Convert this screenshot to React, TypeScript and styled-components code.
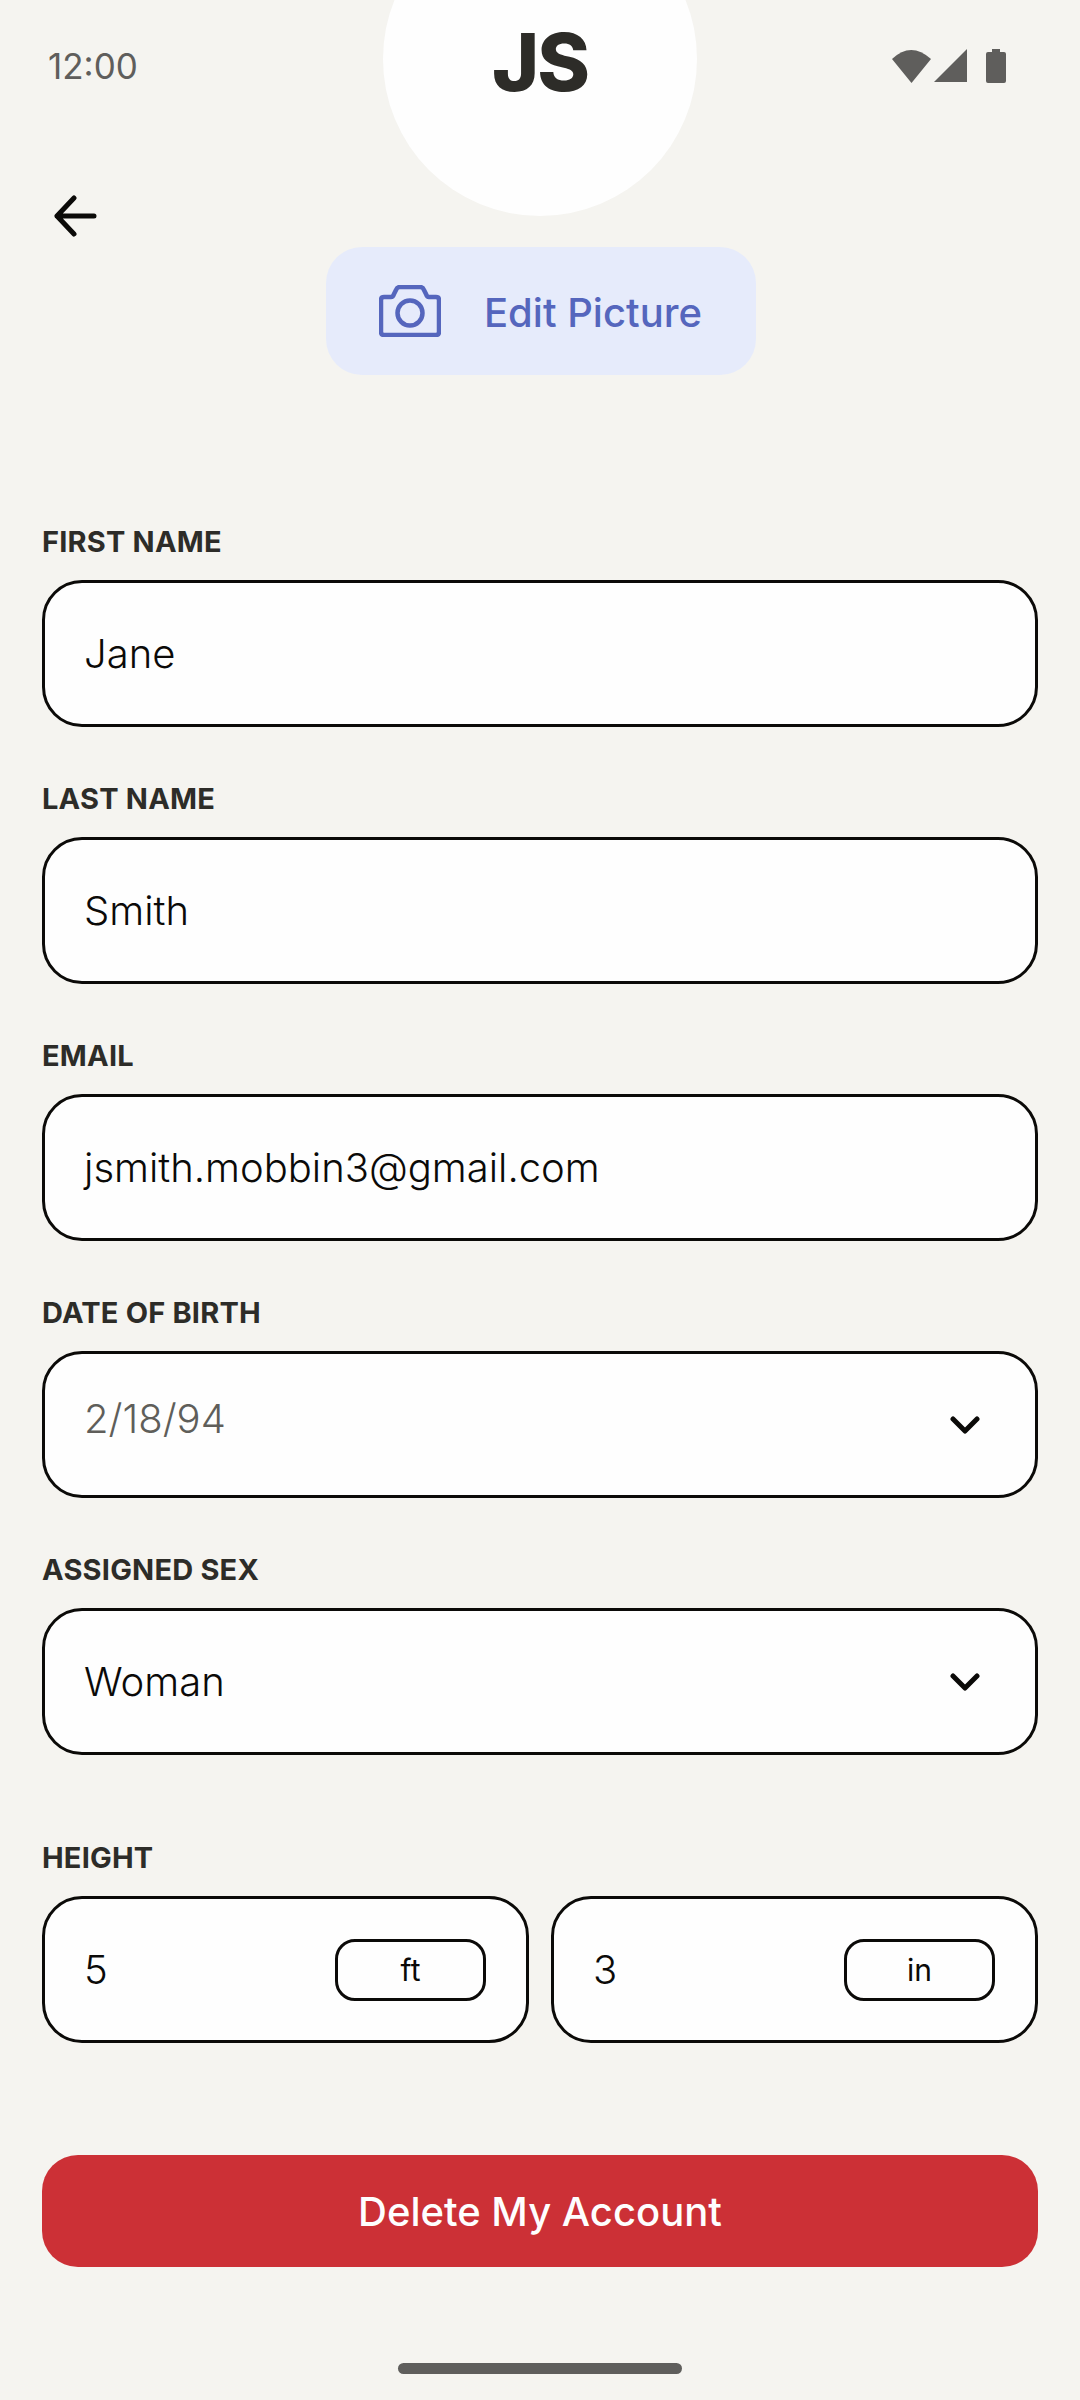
import * as React from "react";
import styled, { createGlobalStyle } from "styled-components";

const colors = {
  page: "#f5f4f0",
  white: "#fefefe",
  ink: "#0b0a08",
  label: "#2d2c28",
  status: "#5f5e5c",
  muted: "#5f5e5a",
  blue: "#5566bd",
  blueLight: "#e6ebfb",
  red: "#cc3036",
};

const GlobalStyle = createGlobalStyle`
  html, body {
    margin: 0;
    background: ${colors.page};
  }
  * {
    box-sizing: border-box;
  }
`;

const Page = styled.div`
  background: ${colors.page};
  color: ${colors.ink};
  display: flex;
  flex-direction: column;
  font-family: "Inter", "Liberation Sans", sans-serif;
  height: 2400px;
  overflow: hidden;
  padding: 0 42px;
  position: relative;
  width: 1080px;
`;

const Avatar = styled.div`
  align-items: flex-start;
  background: ${colors.white};
  border-radius: 50%;
  color: ${colors.label};
  display: flex;
  font-size: 80px;
  font-weight: 800;
  height: 314px;
  justify-content: center;
  left: 383px;
  letter-spacing: -2px;
  line-height: 100px;
  padding-top: 110px;
  position: absolute;
  top: -98px;
  width: 314px;
`;

const StatusBar = styled.div`
  align-items: center;
  color: ${colors.status};
  display: flex;
  font-size: 35px;
  height: 66px;
  justify-content: space-between;
  margin-top: 33px;
  padding: 0 6px;
`;

const StatusIcons = styled.svg`
  margin-right: 26px;
`;

const BackRow = styled.div`
  align-items: center;
  display: flex;
  height: 60px;
  margin-top: 87px;
  padding-left: 11px;
`;

const EditButton = styled.div`
  align-items: center;
  align-self: center;
  background: ${colors.blueLight};
  border-radius: 36px;
  color: ${colors.blue};
  display: flex;
  font-size: 40px;
  font-weight: 500;
  gap: 43px;
  height: 128px;
  margin-left: 2px;
  margin-top: 1px;
  padding-left: 53px;
  width: 430px;
`;

const EditLabel = styled.span`
  margin-top: 2px;
`;

const Form = styled.div`
  display: flex;
  flex-direction: column;
  margin-top: 149px;
`;

const Field = styled.div<{ $gap?: number }>`
  display: flex;
  flex-direction: column;
  margin-bottom: ${(p) => p.$gap ?? 54}px;
`;

const Label = styled.div`
  color: ${colors.label};
  font-size: 29px;
  font-weight: 700;
  height: 56px;
  letter-spacing: 0.2px;
  line-height: 36px;
`;

const InputBox = styled.div<{ $muted?: boolean }>`
  align-items: center;
  background: ${colors.white};
  border: 3px solid ${colors.ink};
  border-radius: 40px;
  color: ${(p) => (p.$muted ? colors.muted : colors.ink)};
  display: flex;
  flex: 0 0 147px;
  font-size: 40px;
  font-weight: 350;
  height: 147px;
  justify-content: space-between;
  padding: 0 55px 0 39px;
`;

const InputText = styled.span<{ $raise?: boolean }>`
  margin-bottom: ${(p) => (p.$raise ? 12 : 0)}px;
`;

const HeightRow = styled.div`
  display: flex;
  gap: 22px;
`;

const HeightBox = styled(InputBox)`
  flex: 1;
  padding-right: 40px;
`;

const UnitPill = styled.div`
  align-items: center;
  border: 3px solid ${colors.ink};
  border-radius: 20px;
  display: flex;
  font-size: 30px;
  font-weight: 400;
  height: 62px;
  justify-content: center;
  width: 151px;
`;

const DeleteButton = styled.div`
  align-items: center;
  background: ${colors.red};
  border-radius: 36px;
  color: ${colors.white};
  display: flex;
  font-size: 40px;
  font-weight: 500;
  height: 112px;
  justify-content: center;
  margin-top: 112px;
`;

const HomeBar = styled.div`
  align-self: center;
  background: ${colors.status};
  border-radius: 6px;
  height: 11px;
  margin-top: 96px;
  width: 284px;
`;

const Chevron: React.FC = () => (
  <svg width="30" height="18" viewBox="0 0 30 18" fill="none" stroke={colors.ink} strokeWidth="5" strokeLinecap="round" strokeLinejoin="round">
    <path d="M3 3 L15 15 L27 3" />
  </svg>
);

const App: React.FC = () => {
  return (
    <Page>
      <GlobalStyle />
      <Avatar>JS</Avatar>
      <StatusBar>
        <span>12:00</span>
        <StatusIcons width="114" height="36" viewBox="0 0 114 36" fill={colors.status}>
          <path d="M0 11 Q19 -7 39 11 L19.5 35 Z" />
          <path d="M42 34 L75 1 L75 34 Z" />
          <path d="M94 6 Q94 4 96 4 L100 4 L100 1 L108 1 L108 4 L112 4 Q114 4 114 6 L114 33 Q114 35 112 35 L96 35 Q94 35 94 33 Z" />
        </StatusIcons>
      </StatusBar>
      <BackRow>
        <svg width="44" height="42" viewBox="0 0 44 42" fill="none" stroke={colors.ink} strokeWidth="5" strokeLinecap="round" strokeLinejoin="round">
          <path d="M41 21 L4 21 M21 3 L4 21 L21 39" />
        </svg>
      </BackRow>
      <EditButton>
        <svg width="62" height="52" viewBox="0 0 62 52" fill="none" stroke={colors.blue} strokeWidth="4.5" strokeLinejoin="round">
          <path d="M2 15 Q2 12 5 12 L12 12 Q14 12 15 9 L17 5 Q18 2 21 2 L41 2 Q44 2 45 5 L47 9 Q48 12 50 12 L57 12 Q60 12 60 15 L60 47 Q60 50 57 50 L5 50 Q2 50 2 47 Z" />
          <circle cx="31" cy="28" r="12.5" />
        </svg>
        <EditLabel>Edit Picture</EditLabel>
      </EditButton>
      <Form>
        <Field>
          <Label>FIRST NAME</Label>
          <InputBox>Jane</InputBox>
        </Field>
        <Field>
          <Label>LAST NAME</Label>
          <InputBox>Smith</InputBox>
        </Field>
        <Field>
          <Label>EMAIL</Label>
          <InputBox>jsmith.mobbin3@gmail.com</InputBox>
        </Field>
        <Field>
          <Label>DATE OF BIRTH</Label>
          <InputBox $muted>
            <InputText $raise>2/18/94</InputText>
            <Chevron />
          </InputBox>
        </Field>
        <Field $gap={85}>
          <Label>ASSIGNED SEX</Label>
          <InputBox>
            <InputText>Woman</InputText>
            <Chevron />
          </InputBox>
        </Field>
        <Field $gap={0}>
          <Label>HEIGHT</Label>
          <HeightRow>
            <HeightBox>
              <span>5</span>
              <UnitPill>ft</UnitPill>
            </HeightBox>
            <HeightBox>
              <span>3</span>
              <UnitPill>in</UnitPill>
            </HeightBox>
          </HeightRow>
        </Field>
      </Form>
      <DeleteButton>Delete My Account</DeleteButton>
      <HomeBar />
    </Page>
  );
};

export default App;
